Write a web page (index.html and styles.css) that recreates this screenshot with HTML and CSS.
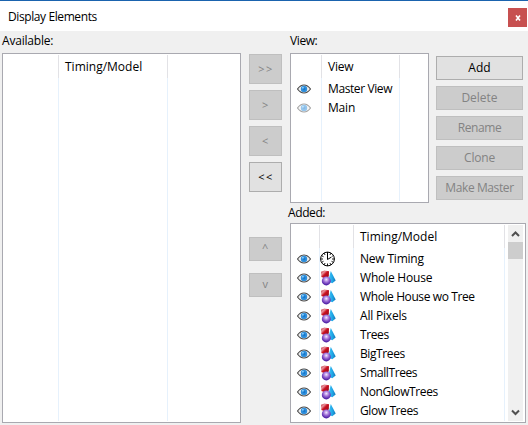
FILE: index.html
```html
<!DOCTYPE html>
<html lang="en">
<head>
<meta charset="utf-8">
<title>Display Elements</title>
<link rel="stylesheet" href="styles.css">
</head>
<body>
<svg class="defs" aria-hidden="true">
  <defs>
    <linearGradient id="red" x1="0" y1="0" x2="1" y2="1"><stop offset="0" stop-color="#c03040"/><stop offset=".3" stop-color="#e89098"/><stop offset=".5" stop-color="#c81020"/><stop offset="1" stop-color="#900818"/></linearGradient>
    <radialGradient id="violet" cx=".5" cy=".35" r=".65"><stop offset="0" stop-color="#f4eaff"/><stop offset=".45" stop-color="#a070d8"/><stop offset="1" stop-color="#40109c"/></radialGradient>
    <linearGradient id="cyan" x1="0" x2="1"><stop offset="0" stop-color="#48c8f8"/><stop offset=".55" stop-color="#20a8e8"/><stop offset="1" stop-color="#1478b8"/></linearGradient>
  </defs>
  <symbol id="eye" viewBox="0 0 14 10">
    <path d="M.5 5C2.500 2.200 4.500 1 7 1s4.500 1.200 6.500 4C11.500 7.800 9.500 9 7 9S2.500 7.800.5 5Z" fill="#eee" stroke="#484848" stroke-width="1.200"/>
    <circle cx="7" cy="4.900" r="3.200" fill="#2f8fdc"/><circle cx="7.200" cy="5" r="1.200" fill="#1678cc"/><circle cx="5.900" cy="3.700" r=".9" fill="#8fd0fa"/>
  </symbol>
  <symbol id="clock" viewBox="0 0 16 16">
    <circle cx="7.500" cy="8" r="6.900" fill="#fff" stroke="#000"/>
    <path d="M7.500 1v7.500M7.500 8.500L11.500 6" fill="none" stroke="#000"/>
    <path d="M7.500 12.500V15M1 8h2M12 8h2.500M4 2l1.100 2M11 2L9.900 4M1.500 4.600l2 1.100M1.500 11.400l2-1.100M13.500 11.400l-2-1.100M13.500 4.600l-1.200.7M4 14l1.100-2M11 14l-1.100-2" stroke="#000" stroke-width=".9"/>
  </symbol>
  <symbol id="model" viewBox="0 0 16 16">
    <path d="M10.800 1L15.700 10.600 12.300 13.300 8 11.500Z" fill="url(#cyan)"/>
    <path d="M1 1.800L4.500.5 9 1.300 8.800 6.500 5 8.200 1.300 7Z" fill="url(#red)"/>
    <circle cx="6.300" cy="10.900" r="4.500" fill="url(#violet)"/>
  </symbol>
</svg>

<header class="titlebar">
  <h1 class="tight">Display Elements</h1>
  <button class="close" aria-label="Close"><svg viewBox="0 0 6 6"><path d="M1 .5l4 5M5 .5L1 5.500"/></svg></button>
</header>

<main class="dialog">
  <section class="available">
    <h2 class="snug">Available:</h2>
    <div class="list cols-available">
      <div class="rules"><i></i><i></i><i></i></div>
      <div class="head"><span></span><span>Timing/Model</span></div>
    </div>
  </section>

  <nav class="transfer">
    <button disabled>&gt;&gt;</button>
    <button disabled>&gt;</button>
    <button disabled>&lt;</button>
    <button>&lt;&lt;</button>
    <button class="move up" disabled>^</button>
    <button class="move" disabled>v</button>
  </nav>

  <div class="right">
    <div class="views">
      <section>
        <h2 class="tight">View:</h2>
        <div class="list cols-view">
          <div class="rules"><i></i><i></i><i></i></div>
          <div class="head"><span></span><span class="snug">View</span></div>
          <div class="row"><svg class="eye"><use href="#eye"/></svg><span class="tight">Master View</span></div>
          <div class="row"><svg class="eye faded"><use href="#eye"/></svg><span class="snug">Main</span></div>
        </div>
      </section>
      <div class="actions">
        <button>Add</button>
        <button disabled>Delete</button>
        <button class="tight" disabled>Rename</button>
        <button class="snug" disabled>Clone</button>
        <button class="tight" disabled>Make Master</button>
      </div>
    </div>
    <section>
      <h2 class="added-label tight">Added:</h2>
      <div class="list cols-added">
        <div class="rules"><i></i><i></i><i></i><i></i></div>
        <div class="head"><span></span><span></span><span>Timing/Model</span></div>
        <div class="row"><svg class="eye"><use href="#eye"/></svg><svg class="kind"><use href="#clock"/></svg><span class="snug">New Timing</span></div>
        <div class="row"><svg class="eye"><use href="#eye"/></svg><svg class="kind"><use href="#model"/></svg><span class="snug">Whole House</span></div>
        <div class="row"><svg class="eye"><use href="#eye"/></svg><svg class="kind"><use href="#model"/></svg><span class="tight">Whole House wo Tree</span></div>
        <div class="row"><svg class="eye"><use href="#eye"/></svg><svg class="kind"><use href="#model"/></svg><span class="snug">All Pixels</span></div>
        <div class="row"><svg class="eye"><use href="#eye"/></svg><svg class="kind"><use href="#model"/></svg><span class="tight">Trees</span></div>
        <div class="row"><svg class="eye"><use href="#eye"/></svg><svg class="kind"><use href="#model"/></svg><span class="tight">BigTrees</span></div>
        <div class="row"><svg class="eye"><use href="#eye"/></svg><svg class="kind"><use href="#model"/></svg><span class="tight">SmallTrees</span></div>
        <div class="row"><svg class="eye"><use href="#eye"/></svg><svg class="kind"><use href="#model"/></svg><span class="tight">NonGlowTrees</span></div>
        <div class="row"><svg class="eye"><use href="#eye"/></svg><svg class="kind"><use href="#model"/></svg><span class="tight">Glow Trees</span></div>
        <div class="scrollbar">
          <svg viewBox="0 0 15 17"><path d="M4 11l3.500-3.500L11 11"/></svg>
          <div class="thumb"></div>
          <svg viewBox="0 0 15 17"><path d="M4 6.500l3.500 3.500L11 6.500"/></svg>
        </div>
      </div>
    </section>
  </div>
</main>
</body>
</html>
```

FILE: styles.css
```css
* { box-sizing: border-box; }
body {
  margin: 0;
  width: 528px;
  height: 425px;
  overflow: hidden;
  background: #f0f0f0;
  color: #000;
  font: 12px/19px "Open Sans", "Noto Sans", sans-serif;
}
.defs { position: absolute; width: 0; height: 0; }
h1, h2 { margin: 0; font: inherit; white-space: nowrap; }
.tight { letter-spacing: -.4px; }
.snug { letter-spacing: -.2px; }

.titlebar {
  display: flex;
  justify-content: space-between;
  height: 31px;
  padding: 6px 1px 0 8px;
  border-top: 1px solid #1a63ae;
  background: #fff;
}
.close {
  display: grid;
  place-items: center;
  width: 19px;
  height: 19px;
  margin-top: 1px;
  padding: 0;
  border: 0;
  background: #c75050;
}
.close svg { width: 6px; height: 6px; fill: none; stroke: #fff; stroke-width: 1.6; }

.dialog {
  display: grid;
  grid-template-columns: 239px 33px 236px;
  column-gap: 8px;
  padding-left: 2px;
}
h2 { height: 22px; }
.added-label { height: 20px; margin-left: -2px; }

.list {
  position: relative;
  display: flex;
  flex-direction: column;
  border: 1px solid #a9a9b0;
  background: #fff;
}
.cols-available { height: 370px; --cols: 56px 109px 1fr; }
.cols-view { height: 150px; --cols: 31px 78px 1fr; }
.cols-added { height: 200px; --cols: 29px 34px 151px 1fr; }
.head, .row, .rules { display: grid; grid-template-columns: var(--cols); }
.head { height: 25px; padding-top: 3px; }
.row { height: 19px; align-items: center; }
.head span, .row span { padding-left: 6px; white-space: nowrap; }
.rules { position: absolute; inset: 1px 0 1px 0; }
.rules i {
  border-style: solid;
  border-width: 0 1px 0 0;
  border-image: linear-gradient(#e2e2e6 24px, #e6f1fc 24px) 1;
}
.rules i:last-child { border: 0; }
.eye { position: relative; width: 14px; height: 10px; margin-left: 6px; }
.faded { opacity: .5; }
.kind { position: relative; width: 16px; height: 16px; }

button {
  padding: 0;
  border: 1px solid #adadad;
  background: #e1e1e1;
  color: #000;
  font: inherit;
  line-height: 20px;
  white-space: nowrap;
}
button:disabled { border-color: #bfbfbf; background: #ccc; color: #838383; }
.transfer { display: flex; flex-direction: column; gap: 6px; padding-top: 23px; }
.transfer button { height: 30px; padding-left: 1px; font-size: 11px; letter-spacing: 1.5px; }
.transfer .move { height: 24px; margin-bottom: 6px; padding-bottom: 2px; }
.transfer .up { margin-top: 39px; }

.views { display: grid; grid-template-columns: 139px 87px; gap: 7px; height: 172px; }
.actions { display: flex; flex-direction: column; gap: 6px; padding-top: 25px; }
.actions button { height: 24px; }
.actions .tight { letter-spacing: -.4px; }
.actions .snug { letter-spacing: -.2px; }

.scrollbar {
  position: absolute;
  inset: 1px 2px 1px auto;
  display: flex;
  flex-direction: column;
  width: 15px;
  background: #f0f0f0;
}
.scrollbar svg { width: 15px; height: 17px; fill: none; stroke: #505050; stroke-width: 2; }
.scrollbar svg:last-child { margin-top: auto; }
.thumb { height: 17px; background: #cdcdcd; }
```
